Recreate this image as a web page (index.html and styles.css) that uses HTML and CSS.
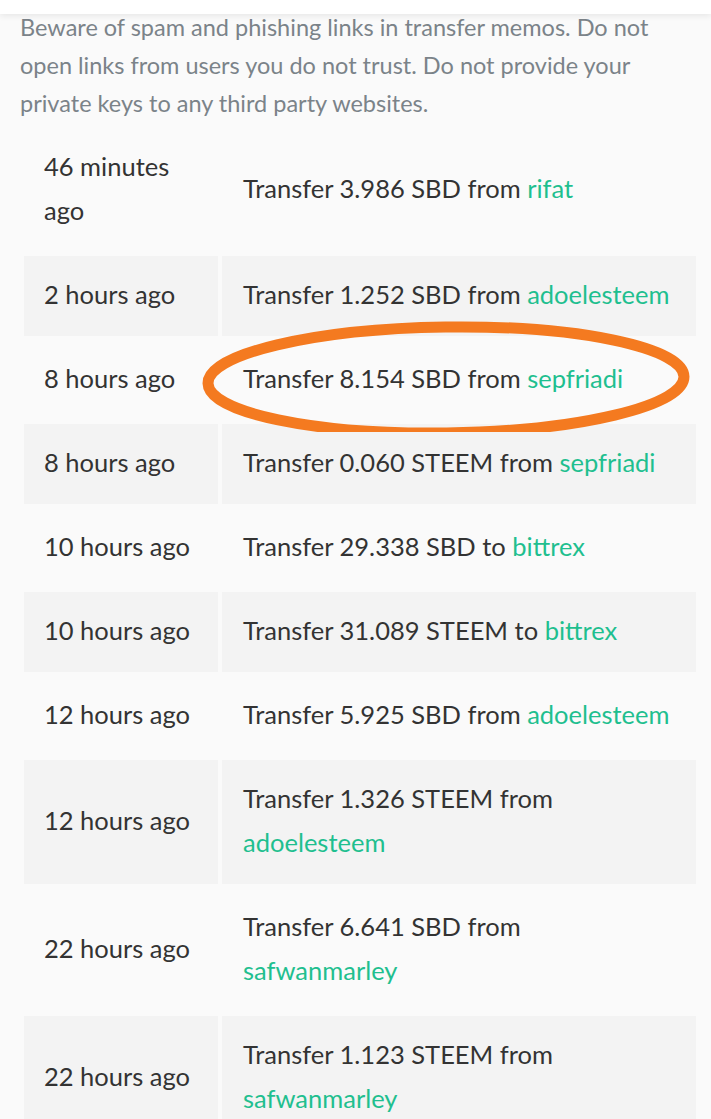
FILE: index.html
```html
<!DOCTYPE html>
<html>
<head>
<meta charset="utf-8">
<link rel="stylesheet" href="styles.css">
</head>
<body>
<div class="topbar"></div>
<main class="content">
  <p class="warning">Beware of spam and phishing links in transfer memos. Do not open links from users you do not trust. Do not provide your private keys to any third party websites.</p>
  <table class="history">
    <tbody>
      <tr><td class="when">46 minutes ago</td><td class="what">Transfer 3.986 SBD from <a href="#">rifat</a></td></tr>
      <tr><td class="when">2 hours ago</td><td class="what">Transfer 1.252 SBD from <a href="#">adoelesteem</a></td></tr>
      <tr><td class="when">8 hours ago</td><td class="what marked">Transfer 8.154 SBD from <a href="#">sepfriadi</a><svg class="circle" viewBox="0 0 520 120" width="520" height="120"><ellipse cx="254" cy="68" rx="238" ry="53" fill="none" stroke="#f47a20" stroke-width="11" transform="rotate(-0.8 254 68)"/></svg></td></tr>
      <tr><td class="when">8 hours ago</td><td class="what">Transfer 0.060 STEEM from <a href="#">sepfriadi</a></td></tr>
      <tr><td class="when">10 hours ago</td><td class="what">Transfer 29.338 SBD to <a href="#">bittrex</a></td></tr>
      <tr><td class="when">10 hours ago</td><td class="what">Transfer 31.089 STEEM to <a href="#">bittrex</a></td></tr>
      <tr><td class="when">12 hours ago</td><td class="what">Transfer 5.925 SBD from <a href="#">adoelesteem</a></td></tr>
      <tr><td class="when">12 hours ago</td><td class="what">Transfer 1.326 STEEM from <a href="#">adoelesteem</a></td></tr>
      <tr><td class="when">22 hours ago</td><td class="what">Transfer 6.641 SBD from <a href="#">safwanmarley</a></td></tr>
      <tr><td class="when">22 hours ago</td><td class="what">Transfer 1.123 STEEM from <a href="#">safwanmarley</a></td></tr>
    </tbody>
  </table>
</main>
</body>
</html>
```

FILE: styles.css
```css
html, body {
  margin: 0;
  padding: 0;
  background: #fafafa;
  font-family: "Lato", "Liberation Sans", sans-serif;
}
.topbar {
  position: fixed;
  top: 0;
  left: 0;
  right: 0;
  height: 14px;
  background: #ffffff;
  box-shadow: 0 2px 6px rgba(0,0,0,0.08);
  z-index: 5;
}
.content {
  padding: 8px 11px 0 20px;
}
.warning {
  margin: 0;
  font-size: 23.5px;
  line-height: 38px;
  color: #7b8389;
}
.history {
  width: 680px;
  border-collapse: separate;
  border-spacing: 4px;
  margin-top: 2px;
  font-size: 25.5px;
  line-height: 44px;
  color: #333333;
}
.history td {
  padding: 16px 20px 20px;
  vertical-align: middle;
}
.history td.when {
  width: 154px;
}
.history td.what {
  padding-left: 21px;
}
.history tr:nth-child(even) td {
  background: #f3f3f3;
}
.history a {
  color: #1fbf8f;
  text-decoration: none;
}
.marked {
  position: relative;
}
.circle {
  position: absolute;
  left: -30px;
  top: -28px;
}
```
